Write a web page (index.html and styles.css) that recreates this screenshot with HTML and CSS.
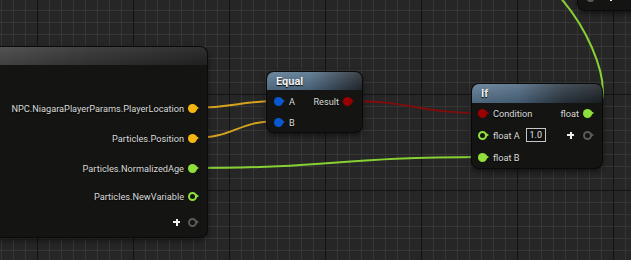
FILE: index.html
```html
<!DOCTYPE html>
<html lang="en">
<head>
  <meta charset="UTF-8" />
  <title>Niagara Graph</title>
  <link rel="stylesheet" href="styles.css">
</head>
<body>
  <div class="graph">
    <svg class="wires" width="631" height="260" viewBox="0 0 631 260">
      <path class="wire wire-vec" d="M192 108 C236 108 236 101 279 101" />
      <path class="wire wire-vec" d="M192 138 C236 138 236 121 279 121" />
      <path class="wire wire-float" d="M192 168 C337 168 337 157 483 157" />
      <path class="wire wire-bool" d="M347 101 C415 101 415 113 483 113" />
      <path class="wire wire-float" d="M587 113 C628 113 585 -10 510 -40" />
    </svg>

    <div class="node node-get">
      <div class="node-head"></div>
      <div class="node-body">
        <div class="row out tall"><span class="label">NPC.NiagaraPlayerParams.PlayerLocation</span><span class="pin vec"></span></div>
        <div class="row out tall"><span class="label">Particles.Position</span><span class="pin vec"></span></div>
        <div class="row out tall"><span class="label">Particles.NormalizedAge</span><span class="pin float"></span></div>
        <div class="row out"><span class="label">Particles.NewVariable</span><span class="pin float hollow"></span></div>
        <div class="row out"><span class="add"></span><span class="pin add-pin hollow"></span></div>
      </div>
    </div>

    <div class="node node-equal">
      <div class="node-head"><span class="title">Equal</span></div>
      <div class="node-body cols">
        <div class="col">
          <div class="row in"><span class="pin int"></span><span class="label">A</span></div>
          <div class="row in"><span class="pin int"></span><span class="label">B</span></div>
        </div>
        <div class="col">
          <div class="row out"><span class="label">Result</span><span class="pin bool"></span></div>
        </div>
      </div>
    </div>

    <div class="node node-if">
      <div class="node-head"><span class="title">If</span></div>
      <div class="node-body cols">
        <div class="col">
          <div class="row in"><span class="pin bool"></span><span class="label">Condition</span></div>
          <div class="row in"><span class="pin float hollow"></span><span class="label">float A</span><span class="value">1.0</span></div>
          <div class="row in"><span class="pin float"></span><span class="label">float B</span></div>
        </div>
        <div class="col">
          <div class="row out"><span class="label">float</span><span class="pin float"></span></div>
          <div class="row out"><span class="add"></span><span class="pin add-pin hollow"></span></div>
        </div>
      </div>
    </div>

    <div class="node node-next">
      <div class="node-body">
        <div class="row in"><span class="pin add-pin hollow"></span><span class="add"></span></div>
      </div>
    </div>
  </div>
</body>
</html>
```

FILE: styles.css
```css
* {
  box-sizing: border-box;
}

body {
  margin: 0;
  font-family: Roboto, 'Liberation Sans', sans-serif;
  background: #1a1a1a;
}

.graph {
  position: relative;
  width: 631px;
  height: 260px;
  overflow: hidden;
  background-color: #262626;
  background-image:
    linear-gradient(to right, #131313 1px, transparent 1px),
    linear-gradient(to bottom, #131313 1px, transparent 1px),
    linear-gradient(to right, #363636 1px, transparent 1px),
    linear-gradient(to bottom, #363636 1px, transparent 1px);
  background-size: 96px 96px, 96px 96px, 12px 12px, 12px 12px;
  background-position: 37px 0, 0 94px, 1px 0, 0 10px;
}

.wires {
  position: absolute;
  left: 0;
  top: 0;
}

.wire {
  fill: none;
  stroke-width: 2;
}

.wire-vec {
  stroke: #d4a21e;
}

.wire-float {
  stroke: #86d034;
}

.wire-bool {
  stroke: #800c0c;
}

/* nodes */

.node {
  position: absolute;
  background: #141513;
  border-radius: 7px;
  box-shadow: 0 0 0 1px #0a0a0a, 0 3px 6px rgba(0, 0, 0, 0.6);
  color: #dadada;
  font-size: 9.2px;
}

.node-head {
  height: 18px;
  border-radius: 7px 7px 0 0;
  padding-left: 9px;
  display: flex;
  align-items: center;
}

.title {
  color: #f2f2f2;
  font-size: 11px;
  font-weight: bold;
  text-shadow: 0 1px 1px #000;
}

.node-get {
  left: -10px;
  top: 47px;
  width: 217px;
  height: 190px;
}

.node-get .node-head {
  background: linear-gradient(to bottom, rgba(255, 255, 255, 0.06), rgba(0, 0, 0, 0.1)),
    linear-gradient(to right, #4a4a4a, #353535 45%, #222322);
}

.node-get .node-body {
  padding-top: 28px;
}

.node-equal {
  left: 267px;
  top: 72px;
  width: 95px;
  height: 60px;
}

.node-equal .node-head {
  background: linear-gradient(to bottom, rgba(255, 255, 255, 0.12), rgba(0, 0, 0, 0.15)),
    linear-gradient(to right, #5a7892, #52708a 45%, #34424f 80%, #232a30);
}

.node-if {
  left: 472px;
  top: 84px;
  width: 130px;
  height: 84px;
}

.node-if .node-head {
  height: 19px;
  background: linear-gradient(to bottom, rgba(255, 255, 255, 0.12), rgba(0, 0, 0, 0.15)),
    linear-gradient(to right, #5a7892, #4e6a82 35%, #2c3843 70%, #1c2126);
}

.node-next {
  left: 578px;
  top: -40px;
  width: 80px;
  height: 50px;
}

.node-next .node-body {
  padding-top: 28px;
}

.node-next .row.in {
  height: 18px;
  padding-left: 8px;
  gap: 9px;
}

/* rows */

.cols {
  display: flex;
  justify-content: space-between;
  padding-top: 1px;
}

.node-if .cols {
  padding-top: 0;
}

.col {
  display: flex;
  flex-direction: column;
  gap: 1px;
}

.node-if .col {
  gap: 2px;
}

.row {
  height: 20px;
  display: flex;
  align-items: center;
  white-space: nowrap;
}

.node-get .row {
  height: 26px;
}

.node-get .row.tall {
  height: 30px;
}

.row.out {
  justify-content: flex-end;
  padding-right: 7px;
  gap: 4px;
}

.row.in {
  padding-left: 7px;
  gap: 3px;
}

.node-if .row.in {
  padding-left: 6px;
}

.label {
  text-shadow: 0 1px 1px rgba(0, 0, 0, 0.8);
}

.value {
  margin-left: 3px;
  width: 20px;
  height: 14px;
  border: 1px solid #c6c6c6;
  background: #101010;
  color: #e0e0e0;
  display: flex;
  align-items: center;
  justify-content: center;
  font-size: 9px;
}

/* pins */

.pin {
  position: relative;
  flex: none;
  width: 9px;
  height: 9px;
  margin-right: 3px;
  border-radius: 50%;
  background: currentColor;
}

.pin::after {
  content: '';
  position: absolute;
  left: 8px;
  top: 2.5px;
  border-left: 3px solid currentColor;
  border-top: 2px solid transparent;
  border-bottom: 2px solid transparent;
}

.pin.hollow {
  background: transparent;
  border: 2px solid currentColor;
}

.pin.hollow::after {
  left: 6px;
  top: 0.5px;
}

.pin.vec {
  color: #f6b610;
}

.pin.float {
  color: #8fe03a;
}

.pin.bool {
  color: #9a0000;
}

.pin.int {
  color: #0a58d0;
}

.pin.add-pin {
  color: #5a5a5a;
}

.add {
  position: relative;
  width: 7px;
  height: 7px;
  margin-right: 4px;
  background:
    linear-gradient(#f0f0f0, #f0f0f0) center / 7px 2px no-repeat,
    linear-gradient(#f0f0f0, #f0f0f0) center / 2px 7px no-repeat;
}

.node-if .row.out .add {
  margin-right: 5px;
}
```
